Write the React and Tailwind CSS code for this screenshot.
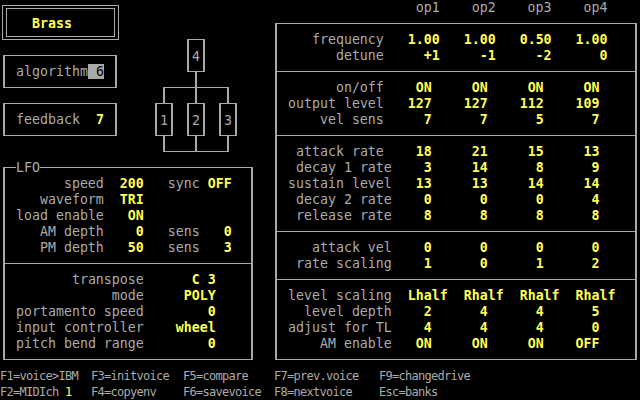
const cls = {
  g: "text-[#aaaaaa]",
  y: "text-[#ffff55] font-bold",
  h: "bg-[#aaaaaa] text-black",
};

// one text-mode line: items are [column, text, kind]
const Line = ({ base, items }) => {
  let cur = base;
  const out = [];
  items.forEach(([col, text, kind], i) => {
    const gap = Math.max(0, col - cur);
    if (gap) out.push(" ".repeat(gap));
    out.push(
      <span key={i} className={cls[kind]}>
        {text}
      </span>
    );
    cur = col + text.length;
  });
  return <div className="h-4 leading-4 whitespace-pre">{out}</div>;
};

const OpRow = ({ label, col, vals, end = 53 }) => (
  <Line
    base={35}
    items={[
      [col, label, "g"],
      ...vals.map((v, i) => [end + 7 * i - v.length + 1, v, "y"]),
    ]}
  />
);

const Section = ({ children, last }) => (
  <div className={`pl-[3px] pt-[8px] pb-[7px] ${last ? "" : "border-b border-[#aaaaaa]"}`}>
    {children}
  </div>
);

const Algo = () => {
  const c = "#aaaaaa";
  const vx = (col) => 8 * col + 3; // vertical line x
  const hy = (row) => 16 * row + 7; // horizontal line y
  const box = (c0, c1, r0, r1, key) => (
    <g key={key} fill={c}>
      <rect x={vx(c0)} y={hy(r0)} width={vx(c1) - vx(c0) + 2} height="1" />
      <rect x={vx(c0)} y={hy(r1)} width={vx(c1) - vx(c0) + 2} height="1" />
      <rect x={vx(c0)} y={hy(r0)} width="2" height={hy(r1) - hy(r0) + 1} />
      <rect x={vx(c1)} y={hy(r0)} width="2" height={hy(r1) - hy(r0) + 1} />
    </g>
  );
  const num = (col, row, t) => (
    <text
      x={8 * col}
      y={16 * row + 12.6}
      fill={c}
      fontSize="13.288"
      fontFamily="DejaVu Sans Mono, monospace"
    >
      {t}
    </text>
  );
  return (
    <svg width="136" height="160" viewBox="120 0 136 160">
      {box(23, 25, 2, 4, "b4")}
      {box(19, 21, 6, 8, "b1")}
      {box(23, 25, 6, 8, "b2")}
      {box(27, 29, 6, 8, "b3")}
      <g fill={c}>
        <rect x={vx(24)} y={hy(4)} width="2" height={hy(6) - hy(4)} />
        <rect x={vx(20)} y={hy(5)} width={vx(28) - vx(20) + 2} height="1" />
        <rect x={vx(20)} y={hy(5)} width="2" height={hy(6) - hy(5)} />
        <rect x={vx(28)} y={hy(5)} width="2" height={hy(6) - hy(5)} />
        <rect x={vx(20)} y={hy(8)} width="2" height={hy(9) - hy(8) + 1} />
        <rect x={vx(24)} y={hy(8)} width="2" height={hy(9) - hy(8) + 1} />
        <rect x={vx(28)} y={hy(8)} width="2" height={hy(9) - hy(8) + 1} />
        <rect x={vx(20)} y={hy(9)} width={vx(28) - vx(20) + 2} height="1" />
      </g>
      {num(24, 3, "4")}
      {num(20, 7, "1")}
      {num(24, 7, "2")}
      {num(28, 7, "3")}
    </svg>
  );
};

export default function App() {
  return (
    <div className="w-[640px] h-[400px] bg-black overflow-hidden flex flex-col text-[#aaaaaa] font-['DejaVu_Sans_Mono',monospace] text-[13.288px]">
      <div className="flex h-[368px]">
        {/* left column */}
        <div className="w-[256px] flex flex-col">
          <div className="flex h-[160px]">
            <div className="w-[120px] flex flex-col">
              <div className="h-[48px]">
                <div className="ml-[2px] mt-[5px] w-[117px] h-[35px] border border-[#aaaaaa] pt-[2px] pb-[2px] px-[3px]">
                  <div className="h-full border border-[#aaaaaa] pt-[7px] pl-[25px]">
                    <div className="h-4 leading-4 text-[#ffff55] font-bold">Brass</div>
                  </div>
                </div>
              </div>
              <div className="h-[48px] pt-[7px]">
                <div className="ml-[3px] w-[114px] h-[33px] border-x-2 border-y border-[#aaaaaa] pt-[8px] pl-[3px]">
                  <Line base={1} items={[[2, "algorithm", "g"], [11, " 6", "h"]]} />
                </div>
              </div>
              <div className="h-[48px] pt-[7px]">
                <div className="ml-[3px] w-[114px] h-[33px] border-x-2 border-y border-[#aaaaaa] pt-[8px] pl-[3px]">
                  <Line base={1} items={[[2, "feedback", "g"], [12, "7", "y"]]} />
                </div>
              </div>
            </div>
            <Algo />
          </div>

          {/* LFO */}
          <div className="h-[208px] flex flex-col">
            <div className="flex h-4">
              <div className="ml-[3px] w-[13px] mt-[7px] h-[9px] border-l-2 border-t border-[#aaaaaa]" />
              <span className="leading-4">LFO</span>
              <div className="flex-1 mr-[3px] mt-[7px] h-[9px] border-r-2 border-t border-[#aaaaaa]" />
            </div>
            <div className="mx-[3px] border-x-2 border-b border-[#aaaaaa]">
              <div className="pl-[3px] pb-[7px] border-b border-[#aaaaaa]">
                <Line base={1} items={[[8, "speed", "g"], [15, "200", "y"], [21, "sync", "g"], [26, "OFF", "y"]]} />
                <Line base={1} items={[[5, "waveform", "g"], [15, "TRI", "y"]]} />
                <Line base={1} items={[[2, "load enable", "g"], [16, "ON", "y"]]} />
                <Line base={1} items={[[5, "AM depth", "g"], [17, "0", "y"], [21, "sens", "g"], [28, "0", "y"]]} />
                <Line base={1} items={[[5, "PM depth", "g"], [16, "50", "y"], [21, "sens", "g"], [28, "3", "y"]]} />
              </div>
              <div className="pl-[3px] pt-[8px] pb-[7px]">
                <Line base={1} items={[[9, "transpose", "g"], [24, "C 3", "y"]]} />
                <Line base={1} items={[[14, "mode", "g"], [23, "POLY", "y"]]} />
                <Line base={1} items={[[2, "portamento speed", "g"], [26, "0", "y"]]} />
                <Line base={1} items={[[2, "input controller", "g"], [22, "wheel", "y"]]} />
                <Line base={1} items={[[2, "pitch bend range", "g"], [26, "0", "y"]]} />
              </div>
            </div>
          </div>
        </div>

        {/* right column: operators */}
        <div className="ml-[16px] w-[368px] flex flex-col">
          <Line base={34} items={[[52, "op1", "g"], [59, "op2", "g"], [66, "op3", "g"], [73, "op4", "g"]]} />
          <div className="ml-[3px] mt-[7px] w-[362px] border-x-2 border-y border-[#aaaaaa]">
            <Section>
              <OpRow label="frequency" col={39} vals={["1.00", "1.00", "0.50", "1.00"]} end={54} />
              <OpRow label="detune" col={42} vals={["+1", "-1", "-2", "0"]} end={54} />
            </Section>
            <Section>
              <OpRow label="on/off" col={42} vals={["ON", "ON", "ON", "ON"]} />
              <OpRow label="output level" col={36} vals={["127", "127", "112", "109"]} />
              <OpRow label="vel sens" col={40} vals={["7", "7", "5", "7"]} />
            </Section>
            <Section>
              <OpRow label="attack rate" col={37} vals={["18", "21", "15", "13"]} />
              <OpRow label="decay 1 rate" col={37} vals={["3", "14", "8", "9"]} />
              <OpRow label="sustain level" col={36} vals={["13", "13", "14", "14"]} />
              <OpRow label="decay 2 rate" col={37} vals={["0", "0", "0", "4"]} />
              <OpRow label="release rate" col={37} vals={["8", "8", "8", "8"]} />
            </Section>
            <Section>
              <OpRow label="attack vel" col={39} vals={["0", "0", "0", "0"]} />
              <OpRow label="rate scaling" col={37} vals={["1", "0", "1", "2"]} />
            </Section>
            <Section last>
              <OpRow label="level scaling" col={36} vals={["Lhalf", "Rhalf", "Rhalf", "Rhalf"]} end={55} />
              <OpRow label="level depth" col={38} vals={["2", "4", "4", "5"]} />
              <OpRow label="adjust for TL" col={36} vals={["4", "4", "4", "0"]} />
              <OpRow label="AM enable" col={40} vals={["ON", "ON", "ON", "OFF"]} />
            </Section>
          </div>
        </div>
      </div>

      {/* function keys */}
      <div className="h-[32px] text-[12px] tracking-[-0.72px] leading-4 whitespace-pre">
        <div className="flex h-4">
          <span className="w-[91px]">F1=voice&gt;IBM</span>
          <span className="w-[92px]">F3=initvoice</span>
          <span className="w-[91px]">F5=compare</span>
          <span className="w-[105px]">F7=prev.voice</span>
          <span>F9=changedrive</span>
        </div>
        <div className="flex h-4">
          <span className="w-[91px]">
            F2=MIDIch <span className="text-[#ffff55]">1</span>
          </span>
          <span className="w-[92px]">F4=copyenv</span>
          <span className="w-[91px]">F6=savevoice</span>
          <span className="w-[105px]">F8=nextvoice</span>
          <span>Esc=banks</span>
        </div>
      </div>
    </div>
  );
}
